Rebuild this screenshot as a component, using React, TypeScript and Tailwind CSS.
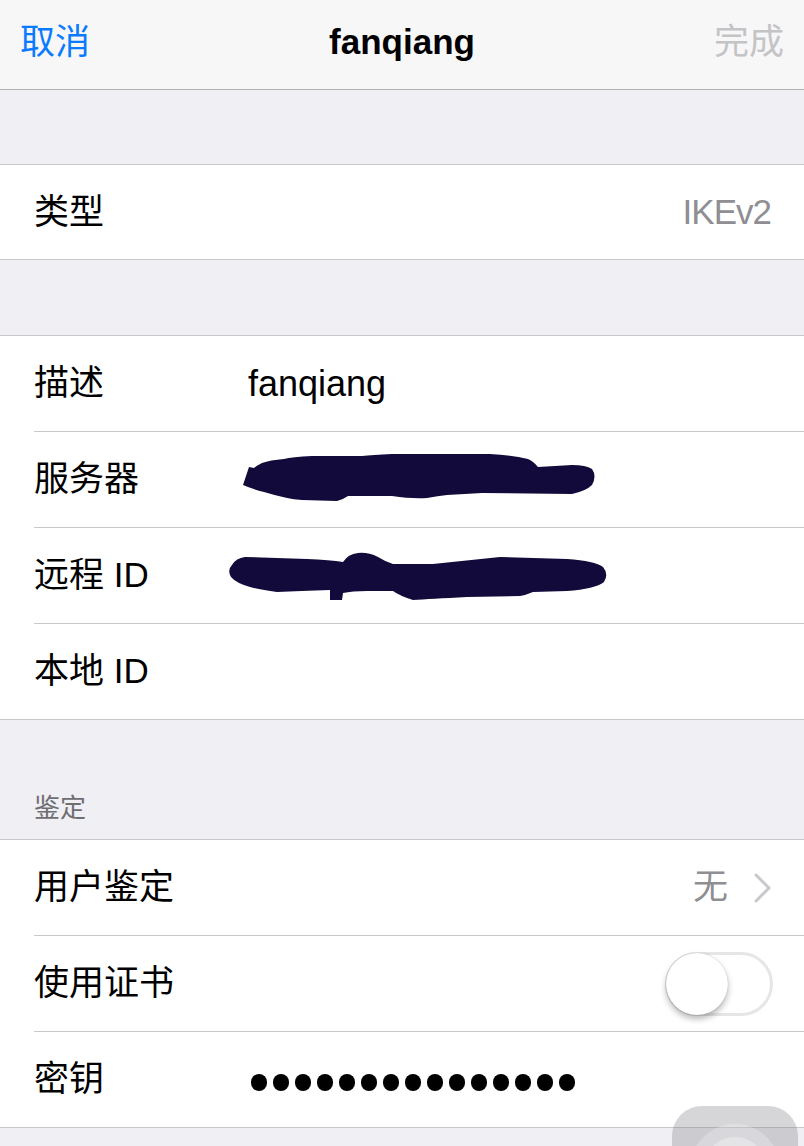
const font = {
  fontFamily: '"Liberation Sans", "Noto Sans CJK SC", sans-serif',
};

function Row({
  label,
  last,
  children,
}: {
  label: string;
  last?: boolean;
  children?: React.ReactNode;
}) {
  return (
    <div className="pl-[34px] bg-white">
      <div
        className={
          "flex items-center pr-[32px] " +
          (last ? "h-[95px]" : "h-[96px] border-b border-[#c8c7cc]")
        }
      >
        <div className="w-[214px] shrink-0 text-[35px] text-black">{label}</div>
        <div className="flex-1 flex items-center min-w-0">{children}</div>
      </div>
    </div>
  );
}

function Scribble1() {
  return (
    <svg width="360" height="60" viewBox="238 450 360 60" className="-ml-[8px]">
      <path
        fill="#110a3a"
        d="M247 467 L241 485 Q250 489 262 492 Q285 499 300 500 L335 501 Q342 499 346 496 L390 496 Q410 499 425 498 Q436 496 445 495 L480 493 L570 494 Q584 491 590 485 Q595 476 590 469 Q584 465 570 465 L536 467 Q531 461 526 459 Q510 455 488 454 L390 454 Q370 455 360 456 L310 456 Q290 457 282 459 Q268 460 260 463 Q254 466 252 468 Z"
      />
    </svg>
  );
}

function Scribble2() {
  return (
    <svg width="384" height="54" viewBox="226 550 384 54" className="-ml-[22px]">
      <path
        fill="#110a3a"
        d="M232 566 Q236 559 245 558 L307 560 Q330 561 343 563 Q348 555 358 554 Q368 553 378 558 Q386 563 393 565 L433 565 L500 558 L567 560 Q595 562 603 568 Q609 575 604 583 Q595 590 567 592 L533 593 Q526 596 520 597 L467 598 Q430 600 413 601 Q400 597 393 592 L367 592 Q352 592 343 594 L342 601 L330 601 L330 591 Q300 592 277 593 Q260 591 250 588 Q236 584 231 578 Q227 571 232 566 Z"
      />
    </svg>
  );
}

function Chevron() {
  return (
    <svg width="18" height="30" viewBox="0 0 18 30" fill="none">
      <polyline
        points="2,2 15,15 2,28"
        stroke="#c7c7cc"
        strokeWidth="3"
        strokeLinecap="round"
        strokeLinejoin="round"
      />
    </svg>
  );
}

function Toggle() {
  return (
    <div className="relative w-[108px] h-[64px] rounded-full border-[3px] border-[#e6e6e9] bg-white">
      <div className="absolute -left-[2px] -top-[2px] w-[62px] h-[62px] rounded-full bg-white shadow-[0_4px_6px_rgba(0,0,0,0.28),0_0_1px_rgba(0,0,0,0.3)]" />
    </div>
  );
}

export default function App() {
  return (
    <div
      className="relative w-[804px] h-[1146px] overflow-hidden bg-[#efeff4]"
      style={font}
    >
      {/* Nav */}
      <div className="h-[90px] bg-[#f7f7f8] border-b border-[#b2b2b2] flex items-center justify-between px-[20px] pb-[4px]">
        <span className="text-[35px] text-[#0a7bff] w-[120px]">取消</span>
        <span className="text-[35px] font-bold text-black">fanqiang</span>
        <span className="text-[35px] text-[#c4c4c6] w-[120px] text-right">完成</span>
      </div>

      <div className="h-[74px]" />

      {/* Type */}
      <div className="border-y border-[#c8c7cc]">
        <div className="pl-[34px] bg-white">
          <div className="flex items-center justify-between h-[94px] pr-[33px]">
            <span className="text-[35px] text-black">类型</span>
            <span className="text-[35px] text-[#8e8e93] tracking-[-1px]">IKEv2</span>
          </div>
        </div>
      </div>

      <div className="h-[75px]" />

      {/* Details */}
      <div className="border-y border-[#c8c7cc]">
        <Row label="描述">
          <span className="text-[36px] text-black">fanqiang</span>
        </Row>
        <Row label="服务器">
          <Scribble1 />
        </Row>
        <Row label="远程 ID">
          <Scribble2 />
        </Row>
        <Row label="本地 ID" last />
      </div>

      {/* Header */}
      <div className="h-[119px] flex flex-col justify-end pl-[34px] pb-[15px]">
        <span className="text-[26px] leading-[32px] text-[#6d6d72]">鉴定</span>
      </div>

      {/* Auth */}
      <div className="border-y border-[#c8c7cc]">
        <Row label="用户鉴定">
          <div className="flex-1 flex items-center justify-end gap-[26px]">
            <span className="text-[35px] text-[#8e8e93]">无</span>
            <Chevron />
          </div>
        </Row>
        <Row label="使用证书">
          <div className="flex-1 flex justify-end -mr-[1px]">
            <Toggle />
          </div>
        </Row>
        <Row label="密钥" last>
          <div className="flex items-center gap-[6px] ml-[3px] mt-[5px]">
            {Array.from({ length: 15 }).map((_, i) => (
              <div key={i} className="w-[16px] h-[17px] rounded-full bg-black" />
            ))}
          </div>
        </Row>
      </div>

      {/* Assistive touch */}
      <div className="absolute left-[672px] top-[1106px] w-[126px] h-[126px] rounded-[30px] bg-[rgba(120,120,125,0.3)] flex items-center justify-center">
        <div className="w-[90px] h-[90px] rounded-full bg-[rgba(255,255,255,0.25)] flex items-center justify-center">
          <div className="w-[64px] h-[64px] rounded-full bg-[rgba(255,255,255,0.3)]" />
        </div>
      </div>
    </div>
  );
}
